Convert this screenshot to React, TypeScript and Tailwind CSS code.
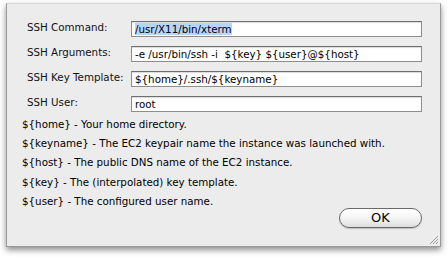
import React from "react";

const rows: { label: string; value: string; selected?: boolean }[] = [
  { label: "SSH Command:", value: "/usr/X11/bin/xterm", selected: true },
  { label: "SSH Arguments:", value: "-e /usr/bin/ssh -i  ${key} ${user}@${host}" },
  { label: "SSH Key Template:", value: "${home}/.ssh/${keyname}" },
  { label: "SSH User:", value: "root" },
];

const help = [
  "${home} - Your home directory.",
  "${keyname} - The EC2 keypair name the instance was launched with.",
  "${host} - The public DNS name of the EC2 instance.",
  "${key} - The (interpolated) key template.",
  "${user} - The configured user name.",
];

export default function App() {
  return (
    <div className="w-[448px] h-[259px] bg-white pt-[3px] pl-[6px]" style={{ fontFamily: '"DejaVu Sans", sans-serif' }}>
      <div className="relative w-[435px] h-[244px] bg-[#ececec] border border-[#9a9a9a] border-t-[#d8d8d8] shadow-[0_3px_6px_rgba(0,0,0,0.45)] flex flex-col text-[10.3px] text-black">
        <div className="flex flex-col gap-[9px] pt-[17px]">
          {rows.map((r) => (
            <div key={r.label} className="flex items-start">
              <div className="w-[124px] pl-[20px] leading-[13px] text-[#111]">{r.label}</div>
              <div className="w-[291px] h-[16px] bg-white border border-[#8e8e8e] border-t-[#6e6e6e] shadow-[inset_0_1px_1px_rgba(0,0,0,0.15)] pl-[3px] leading-[14px] whitespace-pre overflow-hidden">
                {r.selected ? <span className="bg-[#b5d5ff]">{r.value}</span> : r.value}
              </div>
            </div>
          ))}
        </div>
        <div className="flex flex-col pl-[15px] pt-[3px] leading-[19.2px]">
          {help.map((h) => (
            <div key={h} className="whitespace-nowrap">{h}</div>
          ))}
        </div>
        <div className="flex justify-end pr-[18px] -mt-[3px]">
          <button className="w-[83px] h-[20px] rounded-full border border-[#6a6a6a] bg-gradient-to-b from-white via-[#f4f4f4] to-[#dedede] text-[13px] leading-[18px] text-black shadow-[0_1px_1px_rgba(0,0,0,0.2)]">
            OK
          </button>
        </div>
        <svg className="absolute right-[1px] bottom-[1px]" width="11" height="11" viewBox="0 0 11 11">
          <line x1="10" y1="2" x2="2" y2="10" stroke="#9a9a9a" strokeWidth="1" />
          <line x1="10" y1="5" x2="5" y2="10" stroke="#9a9a9a" strokeWidth="1" />
          <line x1="10" y1="8" x2="8" y2="10" stroke="#9a9a9a" strokeWidth="1" />
        </svg>
      </div>
    </div>
  );
}
